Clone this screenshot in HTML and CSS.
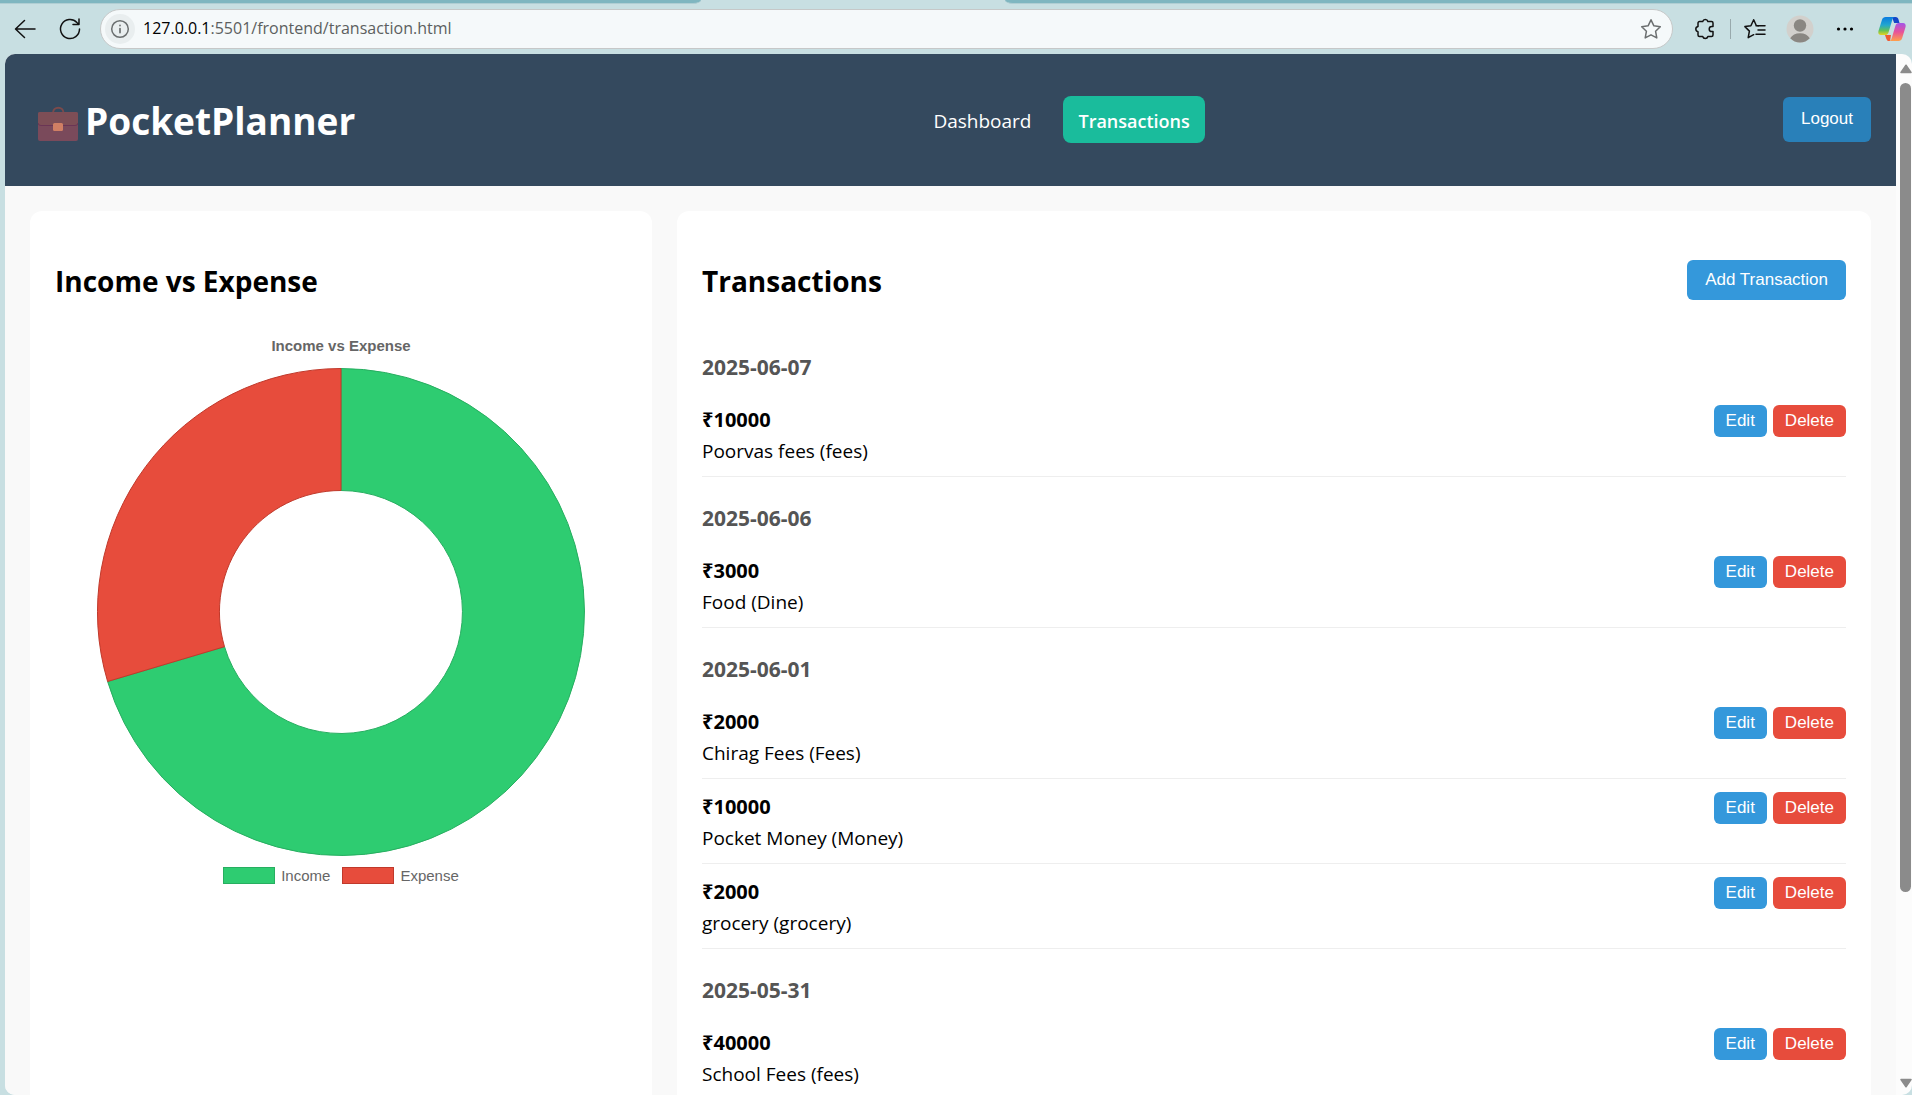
FILE: index.html
```html
<!DOCTYPE html>
<html lang="en">
<head>
<meta charset="utf-8">
<title>PocketPlanner - Transactions</title>
<link rel="stylesheet" href="styles.css">
</head>
<body>
<div class="tab-strip"><span class="tab-edge tab-edge-left"></span><span></span><span class="tab-edge tab-edge-right"></span></div>
<div class="toolbar">
  <div class="tool-nav">
    <button class="tool" type="button" aria-label="Back"><svg width="24" height="24" viewBox="0 0 24 24" class="line"><path d="M22 12H3M11.500 3.500L2.500 12l9 8.500"/></svg></button>
    <button class="tool" type="button" aria-label="Refresh"><svg width="24" height="24" viewBox="0 0 24 24" class="line"><path d="M21.500 12a9.500 9.500 0 1 1-2.600-6.500L21 7.500M21 2v5.500h-6"/></svg></button>
  </div>
  <div class="address">
    <button class="site-info" type="button" aria-label="Site information"><svg width="20" height="20" viewBox="0 0 20 20" class="line muted"><circle cx="10" cy="10" r="8.300"/><path d="M10 9.600v4M10 6.400v.200" stroke-width="1.700"/></svg></button>
    <div class="url" role="textbox" aria-label="Address" contenteditable="true" spellcheck="false"><span class="host">127.0.0.1</span>:5501/frontend/transaction.html</div>
    <button class="tool" type="button" aria-label="Add to favourites"><svg width="24" height="24" viewBox="0 0 24 24" class="line muted"><path d="M12 2.800l2.900 6 6.400.900-4.700 4.600 1.200 6.600-5.800-3.100-5.800 3.100 1.200-6.600L2.700 9.700l6.400-.900z"/></svg></button>
  </div>
  <div class="tool-actions">
    <button class="tool" type="button" aria-label="Extensions"><svg width="24" height="24" viewBox="0 0 24 24" class="line"><path d="M5.500 4.500h3.200a2.700 2.700 0 0 1 5.200 0h3.600a1.500 1.500 0 0 1 1.500 1.500v3.400h-1.200a2.600 2.600 0 0 0 0 5.200H19V18a1.500 1.500 0 0 1-1.500 1.500h-3.600a2.700 2.700 0 0 1-5.200 0H5.500A1.500 1.500 0 0 1 4 18v-3.300a2.700 2.700 0 0 1 0-5.300V6a1.500 1.500 0 0 1 1.500-1.500z"/></svg></button>
    <span class="tool-divider"></span>
    <button class="tool" type="button" aria-label="Favourites"><svg width="24" height="24" viewBox="0 0 24 24" class="line"><path d="M15.500 8.900l-2.100-.200L10.700 2.800 7.900 8.700l-6 .900 4.500 4.500-1.200 6.600 5.500-3M13 8.700h9M15 13h7M13 17.300h9"/></svg></button>
    <button class="avatar" type="button" aria-label="Profile"><svg width="28" height="28" viewBox="0 0 28 28"><circle cx="14" cy="14" r="13.500" fill="#d2d0cc"/><circle cx="14" cy="10.500" r="6.200" fill="#8a8782"/><path d="M4.200 23.300C6 20 9.600 18.200 14 18.200s8 1.800 9.800 5.100A13.500 13.500 0 0 1 14 27.500a13.500 13.500 0 0 1-9.800-4.200z" fill="#8a8782"/></svg></button>
    <button class="tool" type="button" aria-label="Settings and more"><svg width="24" height="24" viewBox="0 0 24 24"><circle cx="5.500" cy="12" r="1.600"/><circle cx="12" cy="12" r="1.600"/><circle cx="18.500" cy="12" r="1.600"/></svg></button>
    <button class="tool" type="button" aria-label="Copilot"><svg width="28" height="26" viewBox="0 0 28 26">
      <defs>
        <linearGradient id="cool" x1="0" y1="0" x2="0" y2="1"><stop offset="0" stop-color="#0a7be0"/><stop offset=".45" stop-color="#22a7cf"/><stop offset=".75" stop-color="#62c15a"/><stop offset="1" stop-color="#e8d31e"/></linearGradient>
        <linearGradient id="warm" x1="0" y1="0" x2="0" y2="1"><stop offset="0" stop-color="#a256e8"/><stop offset=".5" stop-color="#e8529a"/><stop offset="1" stop-color="#ffa04a"/></linearGradient>
      </defs>
      <path d="M14 1h3.500c1.800 0 2.600 1 3.100 2.700L21.500 7h-5.300z" fill="#1446c8"/>
      <path d="M7 19h6l-1 6h-.800c-1.600 0-2.500-1-3-2.600z" fill="#ee5a34"/>
      <path d="M7.700 1H17c-1.500 0-2.200 1-2.700 2.800l-3.700 12.400c-.6 1.900-1.600 2.800-3.500 2.800H3C.6 19-.2 17 .6 14.400L4 3.800C4.600 2 5.800 1 7.700 1z" fill="url(#cool)"/>
      <path d="M20.500 25h-9.600c1.500 0 2.300-1 2.800-2.800l3.700-12.400C18 7.900 19 7 20.900 7H25c2.400 0 3.200 2 2.400 4.600L24.100 22.200c-.600 1.800-1.700 2.800-3.600 2.800z" fill="url(#warm)"/>
    </svg></button>
  </div>
</div>

<div class="window">
  <div class="page">
    <header class="site-header">
      <h1 class="logo">
        <svg class="briefcase" width="40" height="36" viewBox="0 0 40 36" aria-hidden="true"><path d="M15 7c0-7 10.500-7 10.500 0" fill="none" stroke="#7c4a4b" stroke-width="2"/><rect y="6" width="40" height="29" rx="2" fill="#7a4a5b"/><path d="M2 6h36a2 2 0 0 1 2 2v9q0 2-3 2H3q-3 0-3-2V8a2 2 0 0 1 2-2z" fill="#7d4e56"/><path d="M0 17q0 2.500 3 2.500h34q3 0 3-2.500" fill="none" stroke="#6b3555"/><rect x="15" y="17" width="10" height="8" rx="1.500" fill="#d07f64"/></svg>
        PocketPlanner
      </h1>
      <nav class="site-nav">
        <a class="nav-link" href="#dashboard">Dashboard</a>
        <a class="nav-link active" href="#transactions">Transactions</a>
      </nav>
      <button class="btn btn-logout" type="button">Logout</button>
    </header>

    <main class="content">
      <section class="card chart-card">
        <h2 class="card-title">Income vs Expense</h2>
        <figure class="chart">
          <figcaption class="chart-title">Income vs Expense</figcaption>
          <svg class="donut" viewBox="-244 -244 488 488" role="img" aria-label="Income 70%, expense 30%">
            <path class="income" d="M0-243.500A243.500 243.500 0 1 1-233.400 69.500L-116.500 34.700A121.500 121.500 0 1 0 0-121.500z"/>
            <path class="expense" d="M-233.400 69.500A243.500 243.500 0 0 1 0-243.500V-121.500A121.500 121.500 0 0 0-116.500 34.700z"/>
          </svg>
          <div class="legend">
            <span class="legend-item"><span class="swatch swatch-income"></span>Income</span>
            <span class="legend-item"><span class="swatch swatch-expense"></span>Expense</span>
          </div>
        </figure>
      </section>

      <section class="card list-card">
        <div class="list-head">
          <h2 class="card-title">Transactions</h2>
          <button class="btn btn-add" type="button">Add Transaction</button>
        </div>

        <h3 class="date">2025-06-07</h3>
        <article class="row">
          <div class="entry"><strong class="amount">₹10000</strong><p class="detail">Poorvas fees (fees)</p></div>
          <div class="actions"><button class="btn btn-small" type="button">Edit</button><button class="btn btn-small btn-delete" type="button">Delete</button></div>
        </article>

        <h3 class="date">2025-06-06</h3>
        <article class="row">
          <div class="entry"><strong class="amount">₹3000</strong><p class="detail">Food (Dine)</p></div>
          <div class="actions"><button class="btn btn-small" type="button">Edit</button><button class="btn btn-small btn-delete" type="button">Delete</button></div>
        </article>

        <h3 class="date">2025-06-01</h3>
        <article class="row">
          <div class="entry"><strong class="amount">₹2000</strong><p class="detail">Chirag Fees (Fees)</p></div>
          <div class="actions"><button class="btn btn-small" type="button">Edit</button><button class="btn btn-small btn-delete" type="button">Delete</button></div>
        </article>
        <article class="row">
          <div class="entry"><strong class="amount">₹10000</strong><p class="detail">Pocket Money (Money)</p></div>
          <div class="actions"><button class="btn btn-small" type="button">Edit</button><button class="btn btn-small btn-delete" type="button">Delete</button></div>
        </article>
        <article class="row">
          <div class="entry"><strong class="amount">₹2000</strong><p class="detail">grocery (grocery)</p></div>
          <div class="actions"><button class="btn btn-small" type="button">Edit</button><button class="btn btn-small btn-delete" type="button">Delete</button></div>
        </article>

        <h3 class="date">2025-05-31</h3>
        <article class="row">
          <div class="entry"><strong class="amount">₹40000</strong><p class="detail">School Fees (fees)</p></div>
          <div class="actions"><button class="btn btn-small" type="button">Edit</button><button class="btn btn-small btn-delete" type="button">Delete</button></div>
        </article>
      </section>
    </main>
  </div>
  <div class="scrollbar" aria-hidden="true">
    <svg width="12" height="10" viewBox="0 0 12 10"><path d="M6 1.200L11 8.500H1z" fill="#8b8b8b" stroke="#8b8b8b" stroke-width="1.500" stroke-linejoin="round"/></svg>
    <span class="track"><span class="thumb"></span></span>
    <svg width="12" height="10" viewBox="0 0 12 10"><path d="M6 8.800L11 1.500H1z" fill="#8b8b8b" stroke="#8b8b8b" stroke-width="1.500" stroke-linejoin="round"/></svg>
  </div>
</div>
</body>
</html>
```
FILE: styles.css
```css
* { box-sizing: border-box; }

body {
  margin: 0;
  height: 100vh;
  overflow: hidden;
  display: flex;
  flex-direction: column;
  background: #c8dfe2;
  color: #000;
  font-family: "Open Sans", "Noto Sans", sans-serif;
  font-size: 19px;
  line-height: 27px;
}

h1, h2, h3, p, figure { margin: 0; }

button {
  border: 0;
  padding: 0;
  background: none;
  font-family: "Liberation Sans", Arial, sans-serif;
}

svg { display: block; }

/* Browser chrome */
.tab-strip {
  display: grid;
  grid-template-columns: 701fr 304fr 907fr;
  height: 4px;
  flex: none;
}
.tab-edge { background: #7fb6c0; border-bottom: 1px solid #b0ced3; }
.tab-edge-left { border-bottom-right-radius: 8px 4px; }
.tab-edge-right { border-bottom-left-radius: 8px 4px; }

.toolbar {
  display: flex;
  align-items: center;
  flex: none;
  height: 50px;
  padding: 0 4px 0 9px;
}
.tool-nav { display: flex; gap: 13px; margin-right: 14px; }
.tool {
  display: flex;
  align-items: center;
  justify-content: center;
  width: 32px;
  height: 32px;
}
.line { fill: none; stroke: #111; stroke-width: 1.5; stroke-linejoin: round; stroke-linecap: round; }
.muted { stroke: #6b6f70; }

.address {
  display: flex;
  align-items: center;
  flex: 1;
  height: 40px;
  padding: 0 5px 0 4px;
  background: #f5f9fa;
  border: 1px solid #c6c8c8;
  border-radius: 20px;
}
.site-info {
  display: flex;
  align-items: center;
  justify-content: center;
  width: 30px;
  height: 30px;
  border-radius: 50%;
  background: #e9eeef;
}
.url {
  flex: 1;
  padding: 0 0 2px 8px;
  color: #5c5f60;
  font-size: 16px;
  white-space: nowrap;
}
.host { color: #000; }

.tool-actions { display: flex; align-items: center; gap: 15px; padding-left: 17px; }
.tool-divider { width: 1px; height: 20px; margin: 0 -7px; background: #98a9ac; }
.avatar { width: 28px; height: 28px; }

/* Page window */
.window {
  display: flex;
  flex: 1;
  min-height: 0;
  margin-left: 5px;
  overflow: hidden;
  border-radius: 10px;
  background: #fcfcfc;
}
.page { flex: 1; overflow: hidden; background: #f9f9f9; }

.scrollbar {
  display: flex;
  flex-direction: column;
  align-items: center;
  flex: none;
  width: 16px;
  padding: 10px 0 7px 3px;
}
.track { flex: 1; padding: 9px 0; }
.thumb { display: block; width: 11px; height: 82%; border-radius: 6px; background: #8b8b8b; }

.site-header {
  display: flex;
  align-items: center;
  justify-content: space-between;
  height: 132px;
  padding: 0 25px 2px 33px;
  background: #34495e;
  color: #fff;
}
.logo {
  display: flex;
  align-items: center;
  gap: 7px;
  padding-top: 4px;
  font-size: 37px;
  line-height: 54px;
}
.briefcase { margin-top: 5px; }
.site-nav { display: flex; align-items: center; gap: 32px; }
.nav-link { padding: 12px 0 8px; color: #fff; text-decoration: none; }
.nav-link.active {
  padding: 12px 15px 8px;
  border-radius: 8px;
  background: #1abc9c;
  font-size: 18px;
  font-weight: 600;
}

.btn {
  border-radius: 6px;
  color: #fff;
  background: #3498db;
  font-size: 17px;
  line-height: 20px;
}
.btn-logout { padding: 12px 18px 13px; background: #2980b9; }
.btn-add { padding: 10px 18px; }
.btn-small { padding: 6px 12px; }
.btn-delete { background: #e74c3c; }

.content { display: flex; gap: 25px; padding: 25px; }
.card {
  min-width: 0;
  padding: 49px 25px 25px;
  border-radius: 12px;
  background: #fff;
}
.chart-card { flex: 1; }
.list-card { flex: 2; }
.card-title { font-size: 28px; line-height: 42px; }

.chart {
  display: flex;
  flex-direction: column;
  align-items: center;
  padding-top: 35px;
  color: #666;
  font-family: "Liberation Sans", Arial, sans-serif;
  font-size: 15px;
  line-height: 18px;
}
.chart-title { font-weight: bold; }
.donut { width: 86%; max-width: 488px; margin: 13px 0 11px; }
.donut path { stroke-width: 1; }
.income { fill: #2ecc71; stroke: #27ae60; }
.expense { fill: #e74c3c; stroke: #c0392b; }
.legend { display: flex; gap: 12px; }
.legend-item { display: flex; gap: 6px; }
.swatch { width: 52px; height: 17px; border: 1px solid; }
.swatch-income { background: #2ecc71; border-color: #27ae60; }
.swatch-expense { background: #e74c3c; border-color: #c0392b; }

.list-head { display: flex; align-items: flex-start; justify-content: space-between; margin-bottom: 24px; }
.date { padding: 28px 0 11px; color: #555; font-size: 21px; line-height: 27px; }
.row {
  display: flex;
  align-items: flex-start;
  justify-content: space-between;
  padding: 13px 0 11px;
  border-bottom: 1px solid #eee;
}
.entry { padding-top: 1px; }
.amount { display: block; margin-bottom: 5px; font-size: 20px; }
.actions { display: flex; gap: 6px; }
```
